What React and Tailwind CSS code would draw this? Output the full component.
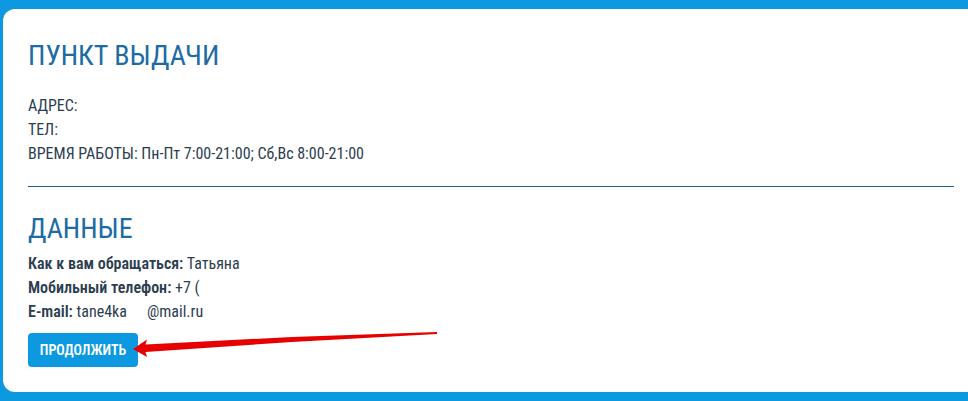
const details = [
  { label: 'Как к вам обращаться:', value: 'Татьяна' },
  { label: 'Мобильный телефон:', value: '+7 (' },
];

function SectionTitle({ children }) {
  return (
    <h2 className="text-[28px] leading-9 text-[#206ba4] uppercase">{children}</h2>
  );
}

function Arrow() {
  return (
    <svg
      className="pointer-events-none absolute top-0 left-[104px] h-7 w-[308px] overflow-visible"
      viewBox="0 0 308 28"
      fill="#e60000"
      aria-hidden="true"
    >
      <path d="M1 16 15 6.500 13.500 11.500 160 4 305-1V1L160 9 13.500 19 15 24Z" />
    </svg>
  );
}

export default function App() {
  return (
    <div className="bg-[#0d99e0] pt-[9px] pb-[9px] pl-[3px] font-['Roboto_Condensed','Liberation_Sans_Narrow','Liberation_Sans',sans-serif] text-[#2c3e50]">
      <main className="rounded-l-xl bg-white pt-[29px] pr-[14px] pb-[25px] pl-[25px]">
        <section>
          <SectionTitle>Пункт выдачи</SectionTitle>
          <div className="mt-5 text-base leading-6">
            <p>АДРЕС:</p>
            <p>ТЕЛ:</p>
            <p>ВРЕМЯ РАБОТЫ: Пн-Пт 7:00-21:00; Сб,Вс 8:00-21:00</p>
          </div>
        </section>
        <hr className="my-5 h-px border-0 bg-[#20608f]" />
        <section className="pt-1">
          <SectionTitle>Данные</SectionTitle>
          <div className="mt-[5px] text-base leading-6">
            {details.map((item) => (
              <p key={item.label}>
                <strong className="font-semibold">{item.label}</strong> {item.value}
              </p>
            ))}
            <p>
              <strong className="font-semibold">E-mail:</strong> tane4ka
              <span className="ml-5">@mail.ru</span>
            </p>
          </div>
          <div className="relative mt-[9px] flex">
            <button
              type="button"
              className="h-[34px] w-[110px] rounded bg-[#0d99e0] text-sm font-semibold text-white"
            >
              ПРОДОЛЖИТЬ
            </button>
            <Arrow />
          </div>
        </section>
      </main>
    </div>
  );
}
